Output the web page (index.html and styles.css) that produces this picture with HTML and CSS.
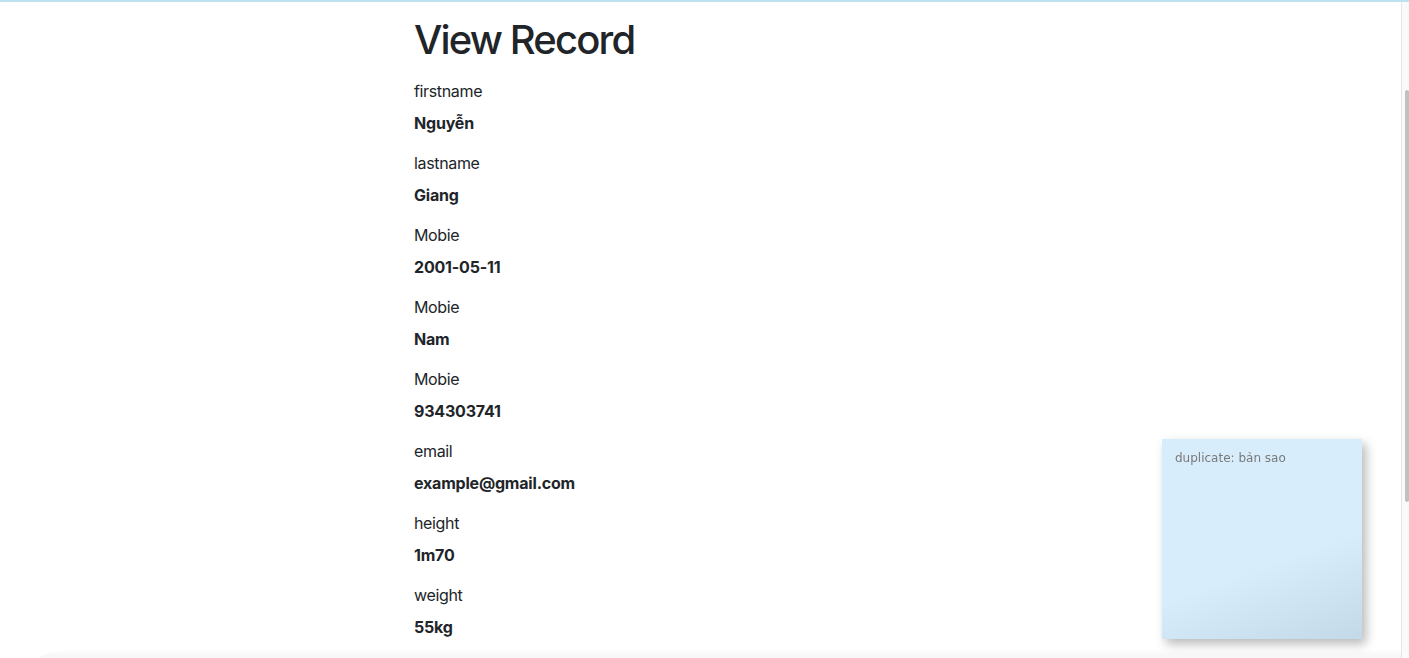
FILE: index.html
```html
<!DOCTYPE html>
<html lang="vi">
<head>
<meta charset="utf-8">
<title>View Record</title>
<link rel="stylesheet" href="styles.css">
</head>
<body>
<div class="topline"></div>
<main class="page">
  <div class="container">
    <div class="col">
      <h1 class="title">View Record</h1>
      <div class="field"><div class="label">firstname</div><p class="value">Nguyễn</p></div>
      <div class="field"><div class="label">lastname</div><p class="value">Giang</p></div>
      <div class="field"><div class="label">Mobie</div><p class="value">2001-05-11</p></div>
      <div class="field"><div class="label">Mobie</div><p class="value">Nam</p></div>
      <div class="field"><div class="label">Mobie</div><p class="value">934303741</p></div>
      <div class="field"><div class="label">email</div><p class="value">example@gmail.com</p></div>
      <div class="field"><div class="label">height</div><p class="value">1m70</p></div>
      <div class="field"><div class="label">weight</div><p class="value">55kg</p></div>
    </div>
  </div>
</main>
<div class="bottom-shade"></div>
<aside class="note">duplicate: bản sao</aside>
<div class="scrollbar"><div class="thumb"></div></div>
</body>
</html>
```
FILE: styles.css
```css
html, body {
  margin: 0;
  padding: 0;
  height: 100%;
  overflow: hidden;
  background: #fff;
}
body {
  font-family: Inter, "Noto Sans", sans-serif;
  font-size: 16px;
  line-height: 24px;
  color: #212529;
}
.topline {
  height: 2px;
  background: #bfe2f2;
}
.page {
  margin-right: 8px;
}
.container {
  max-width: 1140px;
  margin: 0 auto;
}
.col {
  margin-left: calc(25% - 1.5px);
  width: 50%;
  padding-top: 14px;
}
.title {
  margin: 0 0 15px;
  font-size: 40px;
  line-height: 48px;
  font-weight: 500;
  letter-spacing: -1.85px;
}
.field {
  display: flex;
  flex-direction: column;
}
.label {
  margin-bottom: 8px;
  letter-spacing: -0.35px;
}
.value {
  margin: 0 0 16px;
  font-weight: 700;
  letter-spacing: -0.2px;
}
.bottom-shade {
  position: fixed;
  left: 40px;
  right: 8px;
  bottom: 0;
  height: 9px;
  background: linear-gradient(to bottom, rgba(240,240,240,0), #f5f5f5);
  border-top-left-radius: 60px 9px;
}
.note {
  position: fixed;
  right: 47px;
  bottom: 19px;
  width: 200px;
  height: 200px;
  box-sizing: border-box;
  padding: 12px 13px;
  font-family: "DejaVu Sans", Verdana, sans-serif;
  font-size: 12px;
  line-height: 15px;
  color: #7a7a7a;
  background: linear-gradient(160deg, #d8edfb 0%, #d8edfb 60%, #c4d9e8 100%);
  box-shadow: 4px 5px 10px rgba(0,0,0,0.28);
}
.scrollbar {
  position: fixed;
  top: 2px;
  right: 0;
  bottom: 0;
  width: 7px;
  background: #fafafa;
  border-left: 1px solid #e6e6e6;
}
.thumb {
  position: absolute;
  top: 88px;
  left: 3px;
  width: 4px;
  height: 412px;
  background: #c1c1c1;
  border-radius: 2px;
}
```
